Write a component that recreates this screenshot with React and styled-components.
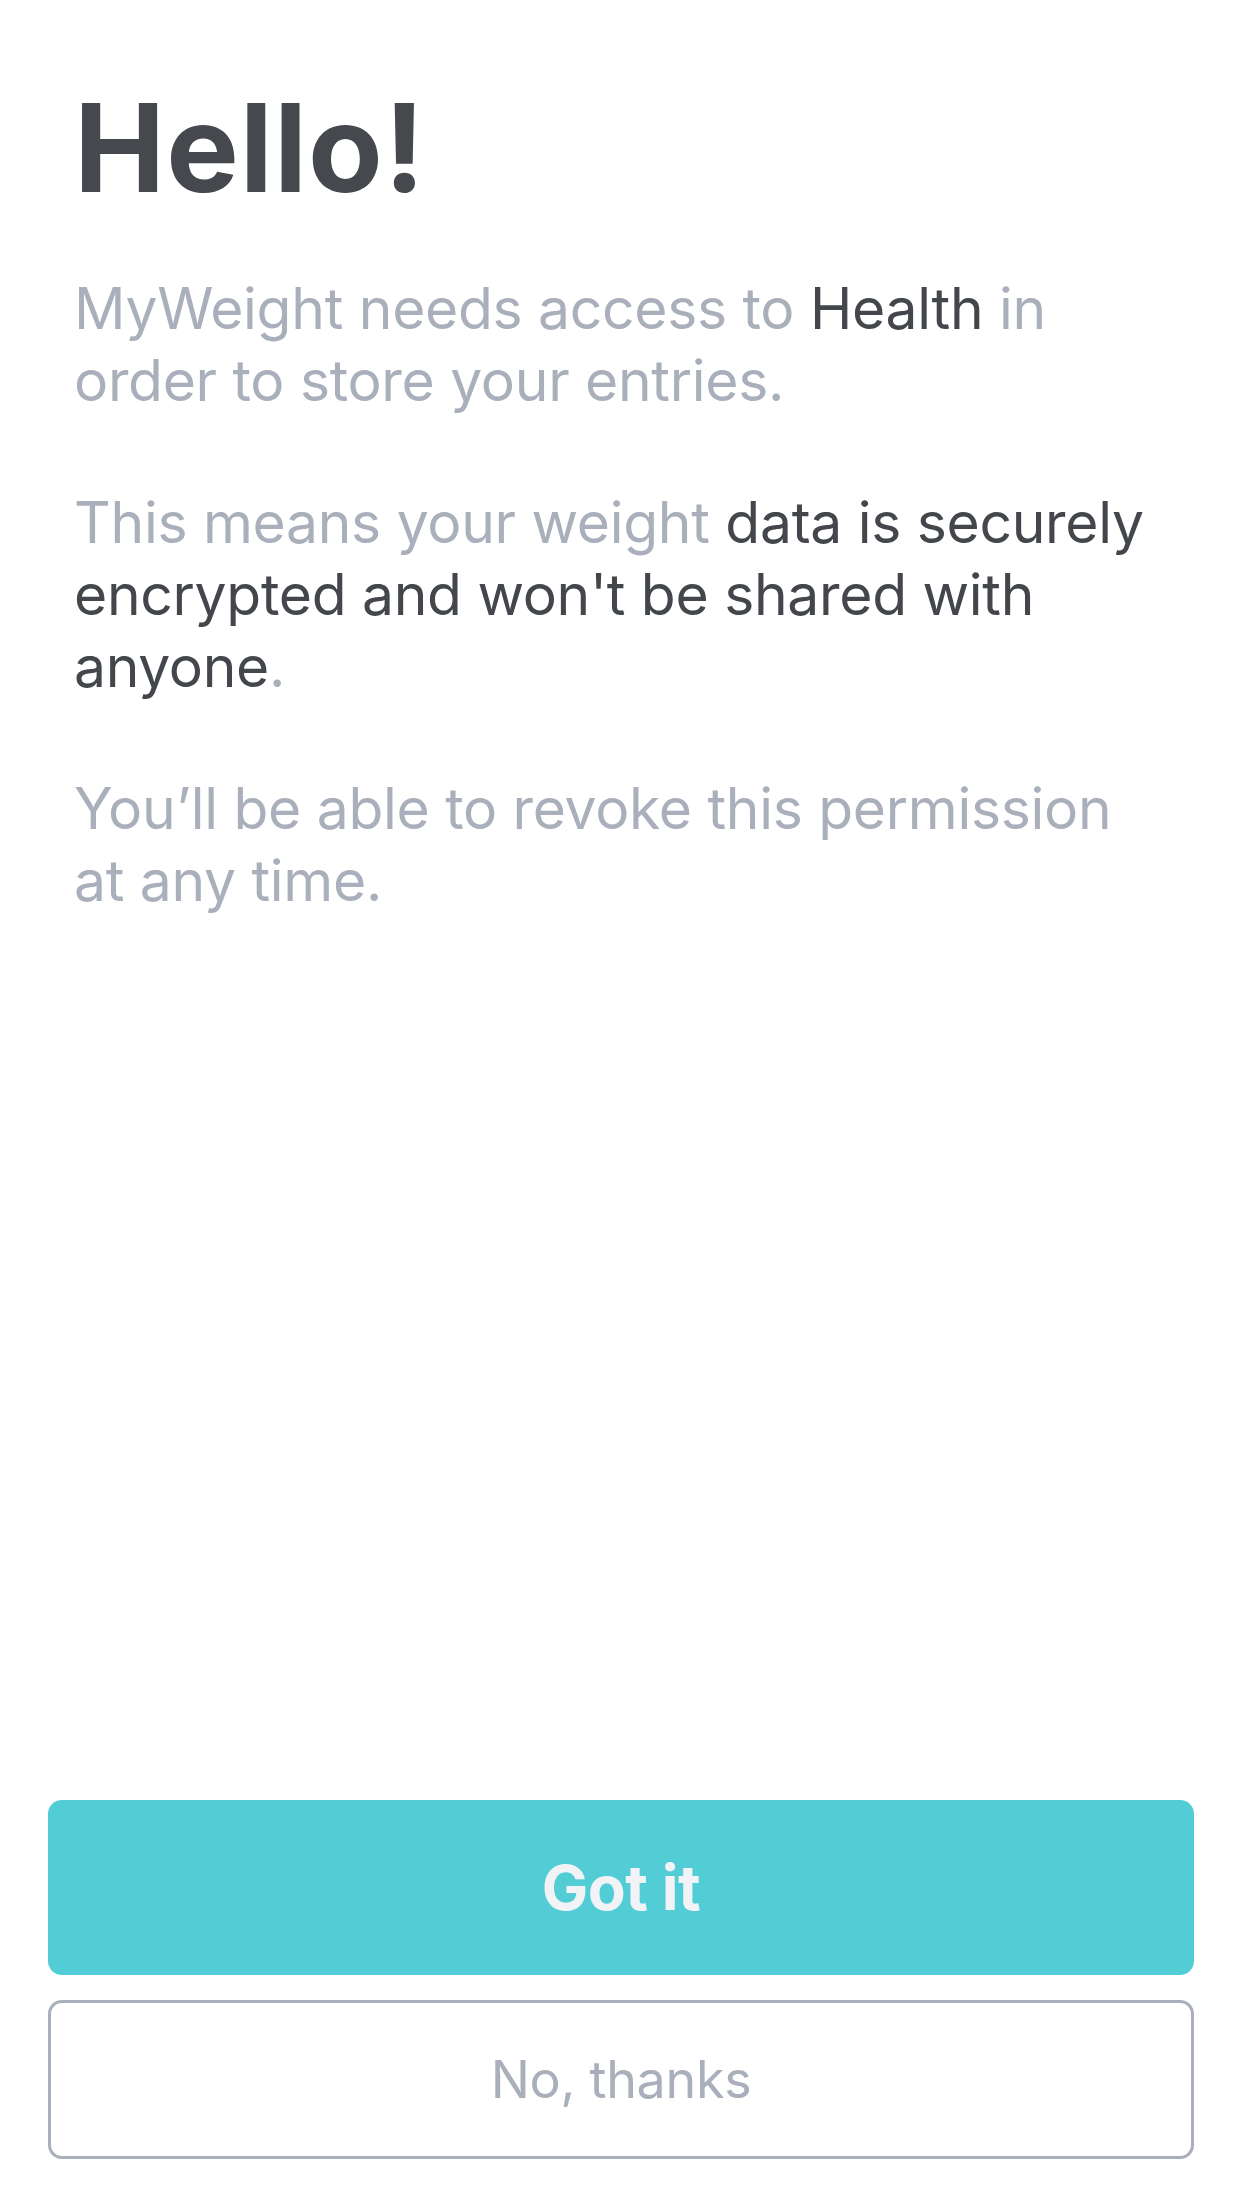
import React from "react";
import styled, { createGlobalStyle } from "styled-components";

const GlobalStyle = createGlobalStyle`
  html, body {
    margin: 0;
    padding: 0;
    background: #ffffff;
  }
  body {
    font-family: Inter, "Noto Sans", "Liberation Sans", sans-serif;
    -webkit-font-smoothing: antialiased;
  }
  * { box-sizing: border-box; }
`;

const Screen = styled.div`
  width: 1242px;
  height: 2208px;
  display: flex;
  flex-direction: column;
  justify-content: space-between;
  background: #ffffff;
`;

const Content = styled.main`
  padding: 87px 92px 0 74px;
`;

const Title = styled.h1`
  margin: 0;
  font-size: 122px;
  line-height: 122px;
  font-weight: 700;
  letter-spacing: 1px;
  color: #45484d;
`;

const Paragraph = styled.p`
  margin: ${(p) => (p.$first ? "64px" : "70px")} 0 0;
  font-size: 57px;
  line-height: 72px;
  font-weight: 400;
  letter-spacing: -0.3px;
  color: #a9afbb;
`;

const Strong = styled.span`
  color: #43464b;
`;

const Actions = styled.div`
  display: flex;
  flex-direction: column;
  gap: 25px;
  padding: 0 48px 49px 48px;
`;

const Button = styled.button`
  display: flex;
  align-items: center;
  justify-content: center;
  width: 100%;
  height: ${(p) => (p.$primary ? "175px" : "159px")};
  border-radius: 14px;
  border: ${(p) => (p.$primary ? "none" : "3px solid #a9b0bc")};
  background: ${(p) => (p.$primary ? "#52ccd5" : "#ffffff")};
  color: ${(p) => (p.$primary ? "#f2f3f6" : "#a9afbb")};
  font-family: Inter, "Noto Sans", "Liberation Sans", sans-serif;
  font-size: ${(p) => (p.$primary ? "62px" : "52px")};
  font-weight: ${(p) => (p.$primary ? 700 : 400)};
  letter-spacing: ${(p) => (p.$primary ? "-0.5px" : "-0.3px")};
  padding: 0;
  cursor: pointer;
`;

export default function App() {
  return (
    <>
      <GlobalStyle />
      <Screen>
        <Content>
          <Title>Hello!</Title>
          <Paragraph $first>
            MyWeight needs access to <Strong>Health</Strong> in order to store
            your entries.
          </Paragraph>
          <Paragraph>
            This means your weight{" "}
            <Strong>
              data is securely encrypted and won't be shared with anyone
            </Strong>
            .
          </Paragraph>
          <Paragraph>
            You’ll be able to revoke this permission at any time.
          </Paragraph>
        </Content>
        <Actions>
          <Button $primary>Got it</Button>
          <Button>No, thanks</Button>
        </Actions>
      </Screen>
    </>
  );
}
